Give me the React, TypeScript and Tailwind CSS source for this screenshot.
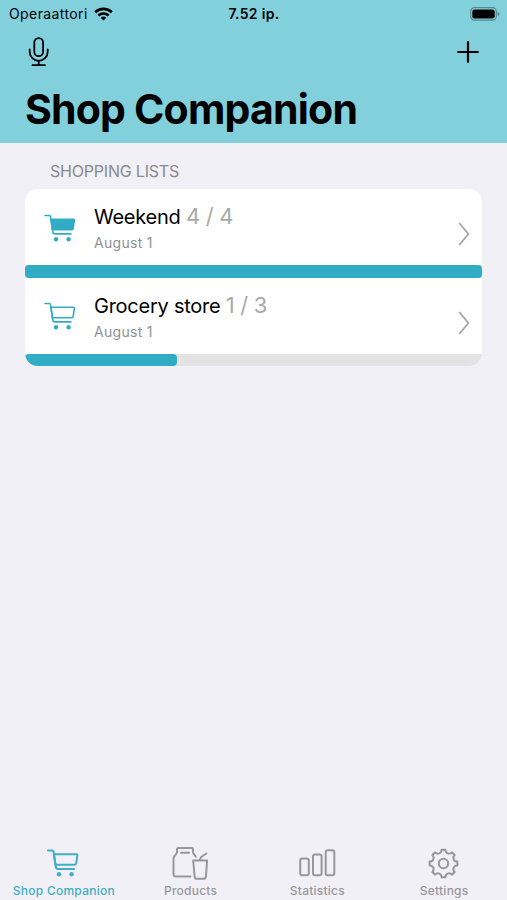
import React from 'react'

interface CartIconProps {
  filled?: boolean
  thick?: boolean
}

const CartIcon = ({ filled, thick }: CartIconProps) => (
  <svg
    width="32"
    height="28"
    viewBox="0 0 32 28"
    fill="none"
    stroke="currentColor"
    strokeWidth={thick ? 2 : 1.6}
    strokeLinecap="round"
    strokeLinejoin="round"
  >
    <path d="M1 1.5h4.3q1 0 1.2 1l2.3 15.4q.3 2 2.2 2h16" />
    <path d="M6.9 5.2h22.6q1 0 .9 1l-1.3 8.4q-.2 1.2-1.4 1.2H8.5z" fill={filled ? 'currentColor' : 'none'} />
    <circle cx="12" cy="25.2" r="2.2" fill="currentColor" stroke="none" />
    <circle cx="24.6" cy="25.2" r="2.2" fill="currentColor" stroke="none" />
  </svg>
)

const ProductsIcon = () => (
  <svg width="36" height="34" viewBox="0 0 36 34" fill="none" stroke="currentColor" strokeWidth="2" strokeLinecap="round" strokeLinejoin="round">
    <path d="M18.5 30.6H4q-2.5 0-2.5-2.5V12.8q0-1.2.7-2.1l2.3-3.2q.5-.8.5-1.6V3.2Q5 2 6.2 2h13.6Q21 2 21 3.2v2.9q0 .8.5 1.5l2.3 3" />
    <path d="M9 6.7h8M21.2 14.4h13.9l-1.2 16.2q-.2 2.2-2.3 2.2h-6.7q-2.1 0-2.3-2.2zM27.8 13.8l1.1-2.5 5.4-3.8" />
  </svg>
)

const StatisticsIcon = () => (
  <svg className="ml-[1px]" width="37" height="28" viewBox="0 0 37 28" fill="none" stroke="currentColor" strokeWidth="2">
    <rect x="1.2" y="9.4" width="8.6" height="16.8" rx="2" />
    <rect x="14" y="5.4" width="8.6" height="20.8" rx="2" />
    <rect x="26.7" y="1.2" width="8.6" height="25" rx="2" />
  </svg>
)

// eight flat teeth joined by round notches
const gearPoint = (deg: number) => {
  const a = (deg * Math.PI) / 180
  return `${(15.5 + 14 * Math.sin(a)).toFixed(2)} ${(15.5 - 14 * Math.cos(a)).toFixed(2)}`
}
const gearPath =
  [0, 45, 90, 135, 180, 225, 270, 315]
    .map((deg, i) => `${i === 0 ? 'M' : 'L'}${gearPoint(deg - 8)}L${gearPoint(deg + 8)}A3.7 3.7 0 0 0 ${gearPoint(deg + 37)}`)
    .join('') + 'z'

const SettingsIcon = () => (
  <svg width="31" height="31" viewBox="0 0 31 31" fill="none" stroke="currentColor" strokeWidth="2" strokeLinejoin="round">
    <path d={gearPath} />
    <circle cx="15.5" cy="15.5" r="4.7" />
  </svg>
)

const StatusBar = () => (
  <div className="flex h-7 items-center justify-between pl-[9px] pr-[7px] text-[14px] leading-7">
    <div className="flex w-[180px] items-center gap-[6px]">
      <span className="tracking-[0.4px]">Operaattori</span>
      <svg width="19" height="14" viewBox="0 0 19 14" fill="none" stroke="black" strokeWidth="2.6">
        <path d="M1.2 5.2a12 12 0 0 1 16.6 0M4.3 8.5a7.6 7.6 0 0 1 10.4 0" />
        <path d="M6.6 10.8a4.4 4.4 0 0 1 5.8 0L9.5 13.6z" fill="black" stroke="none" />
      </svg>
    </div>
    <span className="text-[14px] font-semibold tracking-[0.3px]">7.52 ip.</span>
    <div className="flex w-[181px] justify-end">
      <svg width="30" height="14" viewBox="0 0 30 14" fill="none">
        <rect x=".7" y=".7" width="25.6" height="12.4" rx="3.6" stroke="#548993" strokeWidth="1.2" />
        <rect x="2.3" y="2.4" width="22.4" height="9" rx="2.2" fill="black" />
        <path d="M27.7 4.7q2 .7 2 2.2t-2 2.2z" fill="#548993" />
      </svg>
    </div>
  </div>
)

interface ListRowProps {
  title: string
  date: string
  done: number
  total: number
}

const ListRow = ({ title, date, done, total }: ListRowProps) => (
  <li>
    <div className="flex h-[76px] items-center pl-[19px] pr-3">
      <div className="w-[50px] pt-px text-[#30adc5]">
        <CartIcon filled={done === total} />
      </div>
      <div className="flex-1 pt-[3px]">
        <p className="text-[20px] leading-7 tracking-[-0.25px]">
          {title} <span className="text-[22px] tracking-[-0.3px] text-[#a9a9a9]">{done} / {total}</span>
        </p>
        <p className="text-[14px] leading-6 tracking-[0.3px] text-[#919194]">{date}</p>
      </div>
      <svg className="mt-[14px]" width="12" height="24" viewBox="0 0 12 24" fill="none" stroke="#a5a5a7" strokeWidth="1.8">
        <path d="M1.2 1l9.2 11-9.2 11" />
      </svg>
    </div>
    <div className="h-[12.7px] bg-[#e3e3e3]">
      <div className="h-full rounded-[4px] bg-[#30adc5]" style={{ width: `${(done / total) * 100}%` }} />
    </div>
  </li>
)

const tabs = [
  { label: 'Shop Companion', icon: <CartIcon thick /> },
  { label: 'Products', icon: <ProductsIcon /> },
  { label: 'Statistics', icon: <StatisticsIcon /> },
  { label: 'Settings', icon: <SettingsIcon /> },
]

const App = () => {
  return (
    <div className="flex h-screen flex-col overflow-hidden bg-[#f1f0f6] font-['Inter','Liberation_Sans',sans-serif] text-black">
      <header className="h-[143px] bg-[#83d0dd]">
        <StatusBar />
        <div className="flex h-12 items-center justify-between pl-7 pr-7">
          <svg width="22" height="30" viewBox="0 0 22 30" fill="none" stroke="black" strokeWidth="1.8" strokeLinecap="round">
            <rect x="6.3" y="1.2" width="8.8" height="18" rx="4.4" />
            <path d="M1.7 12.5v2.3a9 9 0 0 0 18 0v-2.3M10.7 24v4M4.5 28.2h12.4" />
          </svg>
          <svg width="22" height="22" viewBox="0 0 22 22" stroke="black" strokeWidth="2.2" strokeLinecap="round">
            <path d="M11 1.2v19.6M1.2 11h19.6" />
          </svg>
        </div>
        <h1 className="pl-[25px] text-[41px] leading-[66px] font-bold tracking-[-0.8px]">Shop Companion</h1>
      </header>
      <main className="flex-1 px-[25px] pt-[18px]">
        <h2 className="pl-[25px] text-[16px] leading-5 tracking-[-0.2px] text-[#89898e]">SHOPPING LISTS</h2>
        <ul className="mt-2 overflow-hidden rounded-[13px] bg-white">
          <ListRow title="Weekend" date="August 1" done={4} total={4} />
          <ListRow title="Grocery store" date="August 1" done={1} total={3} />
        </ul>
      </main>
      <nav className="grid h-[58px] grid-cols-4">
        {tabs.map(({ label, icon }, i) => (
          <div key={label} className={`flex flex-col items-center ${i === 0 ? 'text-[#41aec3]' : 'text-[#97979b]'}`}>
            <div className="flex h-[42px] items-center">{icon}</div>
            <span className="pl-px text-[12px] leading-[14px] font-medium tracking-[0.25px] whitespace-nowrap">{label}</span>
          </div>
        ))}
      </nav>
    </div>
  )
}

export default App
